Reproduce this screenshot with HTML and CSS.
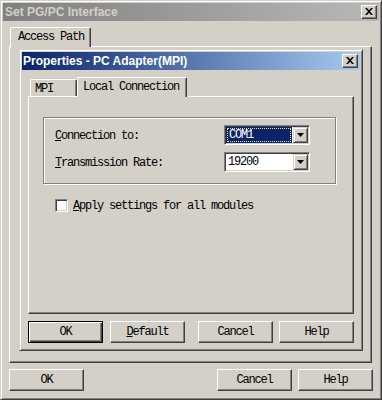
FILE: index.html
```html
<!DOCTYPE html>
<html>
<head>
<meta charset="utf-8">
<title>Set PG/PC Interface</title>
<link rel="stylesheet" href="styles.css">
</head>
<body>
<div class="window">
  <div class="titlebar inactive">
    <span class="title">Set PG/PC Interface</span>
    <span class="close"><svg width="8" height="7" viewBox="0 0 8 7"><path d="M0 0h2l2 2.3 2-2.3h2L5 3.5 8 7H6L4 4.7 2 7H0l3-3.5z" fill="#000"/></svg></span>
  </div>
  <div class="tabstrip outer-tabs">
    <div class="tab selected access-tab">Access Path</div>
  </div>
  <div class="panel outer-panel">
    <div class="dialog">
      <div class="titlebar active">
        <span class="title">Properties - PC Adapter(MPI)</span>
        <span class="close"><svg width="8" height="7" viewBox="0 0 8 7"><path d="M0 0h2l2 2.3 2-2.3h2L5 3.5 8 7H6L4 4.7 2 7H0l3-3.5z" fill="#000"/></svg></span>
      </div>
      <div class="tabstrip inner-tabs">
        <div class="tab mpi-tab">MPI</div>
        <div class="tab selected local-tab">Local Connection</div>
      </div>
      <div class="panel inner-panel">
        <div class="group">
          <span class="label"><u>C</u>onnection to:</span>
          <div class="combo">
            <span class="value highlighted"><span class="focus">COM1</span></span>
            <span class="arrow"><svg width="7" height="4" viewBox="0 0 7 4"><path d="M0 0h7L3.5 4z" fill="#000"/></svg></span>
          </div>
          <span class="label"><u>T</u>ransmission Rate:</span>
          <div class="combo">
            <span class="value">19200</span>
            <span class="arrow"><svg width="7" height="4" viewBox="0 0 7 4"><path d="M0 0h7L3.5 4z" fill="#000"/></svg></span>
          </div>
        </div>
        <div class="check-row">
          <span class="checkbox"></span>
          <span class="check-label"><u>A</u>pply settings for all modules</span>
        </div>
      </div>
      <div class="buttons inner-buttons">
        <div class="btn default">OK</div>
        <div class="btn btn-default-action"><u>D</u>efault</div>
        <div class="btn btn-cancel-inner">Cancel</div>
        <div class="btn btn-help-inner">Help</div>
      </div>
    </div>
  </div>
  <div class="buttons outer-buttons">
    <div class="btn">OK</div>
    <div class="btn btn-cancel-outer">Cancel</div>
    <div class="btn btn-help-outer">Help</div>
  </div>
</div>
</body>
</html>
```

FILE: styles.css
```css
* { box-sizing: border-box; }

body {
  margin: 0;
  background: #d4d0c8;
  font-family: "Liberation Mono", "DejaVu Sans Mono", monospace;
  font-size: 12px;
  letter-spacing: -1.2px;
  color: #000;
}

u { text-decoration: underline; text-underline-offset: 1px; }

.window {
  width: 382px;
  height: 400px;
  background: #d4d0c8;
  border: 1px solid;
  border-color: #d4d0c8 #404040 #404040 #d4d0c8;
  box-shadow: inset 1px 1px #fff, inset -1px -1px #808080;
  padding: 2px;
  display: flex;
  flex-direction: column;
}

/* Title bars */
.titlebar {
  height: 18px;
  flex: none;
  display: flex;
  align-items: center;
  justify-content: space-between;
  padding: 0 2px 0 2px;
}
.titlebar.inactive { background: linear-gradient(to right, #808080, #b8b8b8); }
.titlebar.active { background: linear-gradient(to right, #0a246a, #a6caf0); padding-left: 1px; }
.title {
  font-family: "Liberation Sans", Arial, sans-serif;
  font-weight: bold;
  font-size: 12px;
  letter-spacing: 0;
  white-space: nowrap;
}
.inactive .title { color: #d4d0c8; }
.active .title { color: #fff; }

.close {
  width: 16px;
  height: 14px;
  background: #d4d0c8;
  border: 1px solid;
  border-color: #fff #404040 #404040 #fff;
  box-shadow: inset -1px -1px #808080;
  display: flex;
  align-items: center;
  justify-content: center;
  padding: 0 1px 1px 0;
}
.close svg { display: block; }

/* Tabs */
.tabstrip {
  display: flex;
  align-items: flex-end;
  height: 20px;
  margin-bottom: -1px;
  flex: none;
}
.tab {
  height: 17px;
  margin-bottom: 1px;
  background: #d4d0c8;
  border: 1px solid;
  border-bottom: none;
  border-color: #fff #404040 #404040 #fff;
  border-radius: 2px 2px 0 0;
  box-shadow: inset -1px 0 #808080;
  display: flex;
  align-items: center;
  padding-left: 4px;
  white-space: nowrap;
}
.tab.selected {
  height: 20px;
  margin-bottom: 0;
  position: relative;
  z-index: 1;
}

.outer-tabs { margin: 6px 0 -1px 7px; }
.access-tab { width: 81px; padding-left: 7px; padding-bottom: 1px; }

.inner-tabs { margin: 7px 0 -1px 8px; }
.mpi-tab { width: 47px; padding-left: 4px; padding-top: 2px; }
.local-tab { width: 110px; padding-left: 5px; padding-bottom: 2px; }

/* Panels */
.panel {
  background: #d4d0c8;
  border: 1px solid;
  border-color: #fff #404040 #404040 #fff;
  box-shadow: inset -1px -1px #808080;
}
.outer-panel {
  height: 317px;
  margin: 0 7px 0 6px;
  padding: 2px 0 0 9px;
  flex: none;
}
.inner-panel {
  height: 218px;
  margin: 0 6px 0 6px;
  padding: 20px 0 0 14px;
  flex: none;
}

/* Inner dialog */
.dialog {
  width: 344px;
  height: 302px;
  border: 1px solid;
  border-color: #d4d0c8 #404040 #404040 #d4d0c8;
  box-shadow: inset 1px 1px #fff, inset -1px -1px #808080;
  padding: 2px;
  display: flex;
  flex-direction: column;
}

/* Group box */
.group {
  width: 293px;
  height: 67px;
  border: 1px solid #808080;
  box-shadow: inset 1px 1px #fff, 1px 1px #fff;
  padding: 7px 0 0 11px;
  display: grid;
  grid-template-columns: 169px 86px;
  grid-auto-rows: 20px;
  row-gap: 7px;
  align-items: center;
}
.label { white-space: nowrap; padding-top: 1px; }

.combo {
  width: 86px;
  height: 20px;
  border: 1px solid;
  border-color: #808080 #fff #fff #808080;
  box-shadow: inset 1px 1px #404040, inset -1px -1px #d4d0c8;
  background: #fff;
  padding: 1px;
  display: flex;
}
.value {
  flex: 1;
  display: flex;
  align-items: center;
  padding-left: 2px;
  margin-right: 1px;
}
.value.highlighted {
  background: #0a246a;
  color: #fff;
  padding: 1px;
}
.focus {
  flex: 1;
  height: 100%;
  display: flex;
  align-items: center;
  padding-left: 1px;
  border: 1px dotted #e8e4a0;
}
.arrow {
  width: 15px;
  height: 16px;
  background: #d4d0c8;
  border: 1px solid;
  border-color: #d4d0c8 #404040 #404040 #d4d0c8;
  box-shadow: inset 1px 1px #fff, inset -1px -1px #808080;
  display: flex;
  align-items: center;
  justify-content: center;
}
.arrow svg { display: block; }

/* Checkbox */
.check-row {
  display: flex;
  align-items: center;
  margin: 15px 0 0 12px;
  height: 13px;
}
.checkbox {
  width: 13px;
  height: 13px;
  border: 1px solid;
  border-color: #808080 #fff #fff #808080;
  box-shadow: inset 1px 1px #404040, inset -1px -1px #d4d0c8;
  background: #fff;
  margin-right: 5px;
}
.check-label { white-space: nowrap; }

/* Buttons */
.buttons { display: flex; flex: none; }
.btn {
  width: 75px;
  height: 22px;
  background: #d4d0c8;
  border: 1px solid;
  border-color: #fff #404040 #404040 #fff;
  box-shadow: inset -1px -1px #808080;
  display: flex;
  align-items: center;
  justify-content: center;
  white-space: nowrap;
}
.btn.default {
  border-color: #000;
  box-shadow: inset 1px 1px #fff, inset -1px -1px #404040, inset -2px -2px #808080;
}

.inner-buttons { margin: 7px 0 0 6px; }
.btn-default-action { margin-left: 7px; }
.btn-cancel-inner { margin-left: 13px; }
.btn-help-inner { margin-left: 6px; }

.outer-buttons { margin: 6px 6px 0 6px; }
.btn-cancel-outer { margin-left: auto; }
.btn-help-outer { margin-left: 6px; }
```
